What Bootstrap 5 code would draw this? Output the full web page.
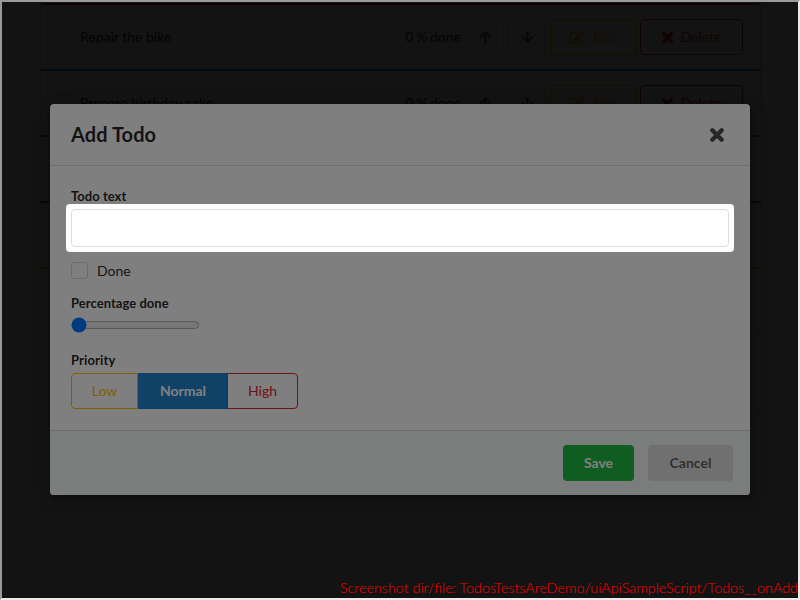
<!DOCTYPE html>
<html lang="en">
<head>
<meta charset="utf-8">
<meta name="viewport" content="width=device-width, initial-scale=1">
<title>Todos</title>
<link href="https://cdn.jsdelivr.net/npm/bootstrap@5.3.0/dist/css/bootstrap.min.css" rel="stylesheet">
<style>
body{font:14px/20px Lato,"Liberation Sans",sans-serif;color:rgba(0,0,0,.87);margin:0;-webkit-font-smoothing:antialiased}
.frame{width:800px;height:600px;border:2px solid;border-color:#9a9a9a #edebe9 #edebe9 #9a9a9a}
.todo-list{width:721px;margin:1px 0 0 38px;box-shadow:0 1px 2px rgba(34,36,38,.15),inset 1px 0 rgba(34,36,38,.15),inset -1px -1px rgba(34,36,38,.15);border-radius:4px}
.todo-row{height:66px;border-top:2px solid #2185d0;padding:0 18px 0 14px}
.todo-row.high{border-color:#db2828;border-radius:4px 4px 0 0}
.todo-row.low{border-color:#fbbd08}
.todo-total{width:721px;height:65px;margin:16px 0 0 38px;border:1px solid rgba(34,36,38,.15);border-radius:4px;box-shadow:0 1px 2px rgba(34,36,38,.15)}
.box{width:17px;height:17px;border:1px solid #d4d4d5;border-radius:3px;flex:none}
.todo-name{margin-left:9px}
.btn{--bs-btn-font-size:14px;--bs-btn-border-radius:4px;--bs-btn-padding-y:0;--bs-btn-padding-x:0;height:36px;display:inline-flex;align-items:center;justify-content:center;flex:none;line-height:14px}
.b-arrow{width:38px;border-color:rgba(34,36,38,.15);color:rgba(0,0,0,.6)}
.b-edit{width:87px;margin-right:3px;border-color:#fbbd08;color:#fbbd08}
.b-del{width:103px;border-color:#db2828;color:#db2828}
.b-edit svg,.b-del svg{margin:0 7px 0 -1px}
.dimmer{inset:0;background:rgba(0,0,0,.85)}
.dialog-card{left:48px;top:102px;width:700px;height:391px;border:0;border-radius:4px;background:#fff;box-shadow:1px 3px 3px rgba(0,0,0,.2),1px 3px 15px 2px rgba(0,0,0,.2);color:rgba(0,0,0,.87)}
.dialog-card .modal-header{height:62px;padding:0 25px 0 21px;border-bottom:1px solid rgba(34,36,38,.15)}
.dialog-card .modal-title{font-size:20px;line-height:24px;font-weight:700;color:rgba(0,0,0,.85);margin-top:-2px;letter-spacing:.08px}
.close-mark{color:rgba(0,0,0,.7)}
.dialog-card .modal-body{padding:21px 21px 0}
.dialog-card .modal-footer{height:65px;padding:0 17px 0 0;background:#f7fbfa;border-top:1px solid rgba(34,36,38,.15);border-radius:0 0 4px 4px;gap:14px}
.dialog-card .modal-footer>*{margin:0}
.field-label{display:block;font-size:13px;line-height:18px;font-weight:700;letter-spacing:.04px}
.text-field{height:38px;border:1px solid #dedede;border-radius:4px;padding:0 14px;margin-top:4px;display:block}
.done-row{margin-top:14px;gap:9px;height:20px}
.done-row .box{margin-top:-1px}
.percent-label{margin-top:13px}
.slider{width:129px;height:16px;margin:5px 0 0;display:block}
.priority-label{margin-top:18px;letter-spacing:.14px}
.b-low{width:67px;border-color:#fbbd08;color:#fbbd08}
.dialog-card .btn-group>.b-normal:not(:first-child){width:90px;margin-left:0;background:#2185d0;border-color:#2185d0;color:#fff}
.b-high{width:71px;border-color:#db2828;color:#db2828}
.dialog-card .btn-group{margin-top:4px}
.dialog-card .btn-group>.btn{flex:none}
.b-save{width:71px;background:#21ba45;color:#fff}
.b-cancel{width:85px;background:#e0e1e2;color:rgba(0,0,0,.6)}
.spotlight{left:64px;top:202px;width:668px;height:48px;border-radius:4px;box-shadow:0 0 0 900px rgba(0,0,0,.5)}
.file-note{right:0;bottom:0;color:#f00;font-weight:300;font-size:14.35px;line-height:20px}
.done-text{margin-right:5px;word-spacing:-1px}
.gap-after{margin-right:4px}
.flip{transform:rotate(180deg)}
</style>
<script src="https://cdn.jsdelivr.net/npm/bootstrap@5.3.0/dist/js/bootstrap.bundle.min.js"></script>
</head>
<body>
<svg width="0" height="0" class="d-none">
<symbol id="i-up" viewBox="0 0 448 512"><path d="M34.9 289.500l-22.200-22.200c-9.400-9.400-9.400-24.600 0-33.900L207 39c9.400-9.400 24.600-9.400 33.900 0l194.300 194.300c9.400 9.400 9.400 24.600 0 33.900L413 289.400c-9.500 9.500-25 9.300-34.300-.4L264 168.600V456c0 13.300-10.700 24-24 24h-32c-13.300 0-24-10.700-24-24V168.600L69.200 289.100c-9.300 9.800-24.800 10-34.300.4z"/></symbol>
<symbol id="i-edit" viewBox="0 0 576 512"><path d="M402.600 83.200l90.200 90.200c3.800 3.800 3.800 10 0 13.800L274.400 405.600l-92.800 10.300c-12.400 1.400-22.900-9.100-21.500-21.500l10.300-92.800L388.800 83.200c3.800-3.800 10-3.800 13.800 0zm162-22.900l-48.800-48.800c-15.200-15.200-39.900-15.200-55.200 0l-35.400 35.400c-3.800 3.800-3.800 10 0 13.800l90.200 90.200c3.800 3.800 10 3.800 13.800 0l35.400-35.400c15.200-15.300 15.200-40 0-55.200zM384 346.200V448H64V128h229.800c3.200 0 6.200-1.300 8.500-3.500l40-40c7.600-7.600 2.200-20.500-8.500-20.500H48C21.500 64 0 85.500 0 112v352c0 26.500 21.500 48 48 48h352c26.500 0 48-21.500 48-48V306.200c0-10.700-12.900-16-20.500-8.500l-40 40c-2.200 2.300-3.500 5.300-3.500 8.500z"/></symbol>
<symbol id="i-x" viewBox="0 0 14 14"><path d="M2.900 2.900 11.100 11.100M11.100 2.900 2.900 11.100" fill="none" stroke="currentColor" stroke-width="3.800" stroke-linecap="round"/></symbol>
</svg>
<div class="frame position-relative overflow-hidden">
  <div class="overflow-hidden">
    <div class="todo-list" id="todos"></div>
    <div class="todo-total"></div>
  </div>
  <div class="dimmer position-absolute"></div>
  <div class="modal-content dialog-card position-absolute">
    <div class="modal-header">
      <h1 class="modal-title">Add Todo</h1>
      <svg class="close-mark" width="16" height="16" role="img" aria-label="Close"><use href="#i-x"/></svg>
    </div>
    <div class="modal-body">
      <label class="field-label" for="todoText">Todo text</label>
      <input class="form-control text-field" id="todoText" type="text">
      <div class="done-row d-flex align-items-center"><span class="box"></span><span>Done</span></div>
      <label class="field-label percent-label" for="percent">Percentage done</label>
      <input class="slider" id="percent" type="range" value="0">
      <span class="field-label priority-label">Priority</span>
      <div class="btn-group">
        <button class="btn b-low">Low</button>
        <button class="btn b-normal fw-bold">Normal</button>
        <button class="btn b-high">High</button>
      </div>
    </div>
    <div class="modal-footer justify-content-end">
      <button class="btn b-save fw-bold border-0">Save</button>
      <button class="btn b-cancel fw-bold border-0">Cancel</button>
    </div>
  </div>
  <div class="spotlight position-absolute"></div>
  <div class="file-note position-absolute text-nowrap">Screenshot dir/file: TodosTestsAreDemo/uiApiSampleScript/Todos__onAdd</div>
</div>
<script>
const rows = [["high","Repair the bike"],["","Prepare birthday cake"],["",""],["",""],["low",""]];
document.getElementById("todos").innerHTML = rows.map(([p, t]) => `
<div class="todo-row ${p} d-flex align-items-center">${t ? `
  <span class="box"></span><span class="todo-name flex-grow-1">${t}</span>
  <span class="done-text">0 % done</span>
  <button class="btn b-arrow gap-after"><svg width="13" height="14" fill="currentColor"><use href="#i-up"/></svg></button>
  <button class="btn b-arrow gap-after"><svg class="flip" width="13" height="14" fill="currentColor"><use href="#i-up"/></svg></button>
  <button class="btn b-edit"><svg width="16" height="14" fill="currentColor"><use href="#i-edit"/></svg>Edit</button>
  <button class="btn b-del"><svg width="13" height="13"><use href="#i-x"/></svg>Delete</button>` : ""}
</div>`).join("");
</script>
</body>
</html>
